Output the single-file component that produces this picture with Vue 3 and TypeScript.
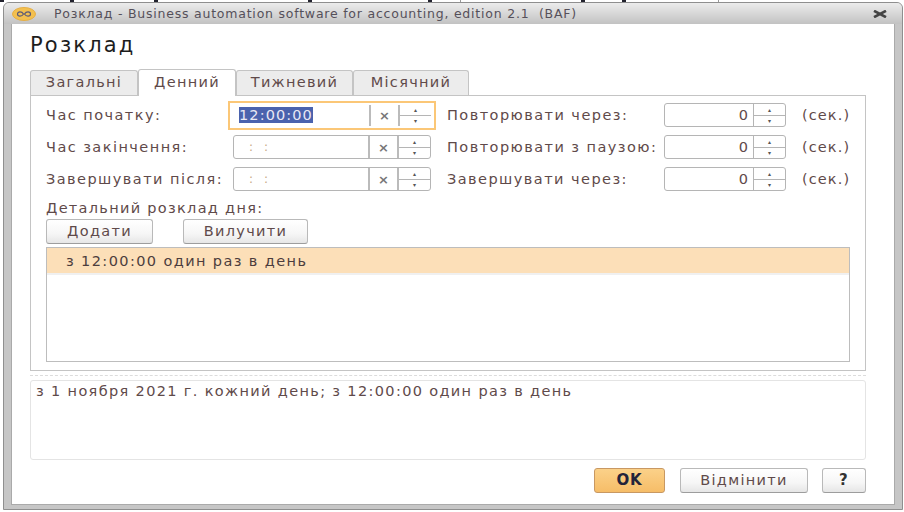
<script setup lang="ts">
const tabs = [
  { label: 'Загальні', width: 108 },
  { label: 'Денний', width: 98 },
  { label: 'Тижневий', width: 117 },
  { label: 'Місячний', width: 116 },
]
const leftRows = [
  { label: 'Час початку:', value: '12:00:00', active: true },
  { label: 'Час закінчення:', value: ': :', active: false },
  { label: 'Завершувати після:', value: ': :', active: false },
]
const rightRows = ['Повторювати через:', 'Повторювати з паузою:', 'Завершувати через:']
const ticks = [0, 70, 154, 308, 428, 581, 622]
</script>

<template>
  <div class="page">
    <svg class="top-ticks" width="904" height="2" viewBox="0 0 904 2" aria-hidden="true">
      <rect v-for="x in ticks" :key="x" :x="x" y="0" width="4" height="2" fill="#22222e" />
      <rect x="460" y="0" width="1" height="2" fill="#999" />
      <rect x="718" y="0" width="1" height="2" fill="#999" />
    </svg>
    <div class="window">
      <header class="titlebar">
        <svg class="logo" width="24" height="14" viewBox="0 0 24 14">
          <ellipse cx="12" cy="7" rx="11.500" ry="6.500" fill="#f3c04f" stroke="#e5ae45" />
          <path d="M11.500 7c-1-1.700-2-2.200-3.500-2.200S5.500 5.700 5.500 7s1 2.200 2.500 2.200S10.500 8.700 11.500 7zm1 0c1-1.700 2-2.200 3.500-2.200s2.500.9 2.500 2.200-1 2.200-2.500 2.200S13.500 8.700 12.500 7z" fill="none" stroke="#5a5a78" stroke-width="1.200" />
        </svg>
        <span class="title-text">Розклад - Business automation software for accounting, edition 2.1 &nbsp;(BAF)</span>
        <svg class="close" width="14" height="8" viewBox="0 0 14 8">
          <path d="M1 .8l12 6.400M13 .8L1 7.200" stroke="#444" stroke-width="2.600" />
        </svg>
      </header>

      <main class="body">
        <h1 class="heading">Розклад</h1>

        <nav class="tabs">
          <div
            v-for="(tab, i) in tabs"
            :key="tab.label"
            class="tab"
            :class="{ selected: i === 1 }"
            :style="{ width: tab.width + 'px' }"
          >{{ tab.label }}</div>
        </nav>

        <section class="panel">
          <div class="fields">
            <div class="col-left">
              <div v-for="row in leftRows" :key="row.label" class="row">
                <label class="label label-left">{{ row.label }}</label>
                <div class="time-input" :class="{ active: row.active }">
                  <div class="time-value">
                    <span v-if="row.active" class="sel">{{ row.value }}</span>
                    <span v-else class="blank">:&nbsp;&nbsp;:</span>
                  </div>
                  <div class="clear">×</div>
                  <div class="spin">
                    <span>▴</span>
                    <span>▾</span>
                  </div>
                </div>
              </div>
            </div>
            <div class="col-right">
              <div v-for="row in rightRows" :key="row" class="row">
                <label class="label label-right">{{ row }}</label>
                <div class="num-input">
                  <div class="num-value">0</div>
                  <div class="spin">
                    <span>▴</span>
                    <span>▾</span>
                  </div>
                </div>
                <span class="unit">(сек.)</span>
              </div>
            </div>
          </div>

          <div class="detail-label">Детальний розклад дня:</div>
          <div class="actions">
            <button class="btn btn-add">Додати</button>
            <button class="btn btn-remove">Вилучити</button>
          </div>
          <div class="list">
            <div class="list-item">з 12:00:00 один раз в день</div>
          </div>
        </section>

        <div class="splitter"></div>

        <div class="summary">з 1 ноября 2021 г. кожний день; з 12:00:00 один раз в день</div>

        <footer class="footer">
          <button class="btn btn-ok">OK</button>
          <button class="btn btn-cancel">Відмінити</button>
          <button class="btn btn-help">?</button>
        </footer>
      </main>
    </div>
  </div>
</template>

<style scoped>
.page {
  position: relative;
  width: 904px;
  height: 512px;
  box-sizing: border-box;
  padding: 2px 1px 2px 3px;
  background: #fff;
  overflow: hidden;
  font-family: "DejaVu Sans", sans-serif;
  color: #5f4a4a;
}
.top-ticks {
  position: absolute;
  top: 0;
  left: 0;
}
.window {
  height: 100%;
  box-sizing: border-box;
  display: flex;
  flex-direction: column;
  border: 1px solid #8f8f8f;
  border-radius: 6px 6px 0 0;
  background: #c6c6c6;
  padding: 0 7px 4px;
}
.titlebar {
  height: 21px;
  flex: none;
  display: flex;
  align-items: center;
  margin: 0 -7px;
  padding: 0 15px 0 8px;
  background: linear-gradient(#ececec, #c2c2c2);
  border-radius: 5px 5px 0 0;
}
.logo { flex: none; }
.title-text {
  margin-left: 18px;
  font-size: 12.500px;
  letter-spacing: 0.78px;
  color: #55505a;
  white-space: nowrap;
  flex: 1;
}
.close { flex: none; }
.body {
  flex: 1;
  background: #fff;
  padding: 0 28px 0 18px;
  display: flex;
  flex-direction: column;
  border: 1px solid #aaa;
  border-top: none;
  min-height: 0;
}
.heading {
  margin: 9px 0 0;
  height: 24px;
  line-height: 24px;
  font-size: 21px;
  font-weight: 400;
  color: #1d1d1d;
  letter-spacing: 2.2px;
}
.tabs {
  margin-top: 12px;
  display: flex;
  height: 26px;
  position: relative;
  z-index: 1;
}
.tab {
  box-sizing: border-box;
  height: 25px;
  margin-top: 1px;
  border: 1px solid #c4c4c4;
  border-bottom: none;
  border-radius: 3px 3px 0 0;
  background: #ececec;
  font-size: 14.500px;
  letter-spacing: 1.3px;
  line-height: 23px;
  text-align: center;
  color: #5f4a4a;
}
.tab.selected {
  height: 27px;
  margin-top: 0;
  background: #fff;
  line-height: 25px;
}
.panel {
  height: 276px;
  flex: none;
  box-sizing: border-box;
  border: 1px solid #c4c4c4;
  padding: 3px 15px 0;
  display: flex;
  flex-direction: column;
}
.fields {
  display: flex;
  height: 96px;
  flex: none;
}
.col-left { width: 401px; flex: none; }
.col-right { flex: 1; }
.row {
  display: flex;
  align-items: center;
  height: 32px;
}
.label {
  font-size: 14.500px;
  letter-spacing: 1.45px;
  white-space: nowrap;
  color: #5f4a4a;
}
.label-left { width: 187px; flex: none; }
.label-right { width: 217px; flex: none; }
.time-input, .num-input {
  box-sizing: border-box;
  height: 24px;
  display: flex;
  border: 1px solid #b5b5b5;
  border-radius: 3px;
  background: #fff;
}
.time-input { width: 198px; }
.time-input.active {
  border: 2px solid #fbc777;
  border-radius: 0;
  height: 29px;
  width: 208px;
  margin-left: -5px;
  padding: 2px 3px 2px 2px;
}
.time-value {
  flex: 1;
  display: flex;
  align-items: center;
  padding-left: 15px;
  font-size: 14.500px;
  letter-spacing: 1.1px;
}
.active .time-value { padding-left: 7px; }
.sel {
  background: #4a62ad;
  color: #e8e8f4;
  line-height: 16px;
}
.blank { color: #c8a884; font-size: 12px; }
.clear {
  width: 31px;
  flex: none;
  display: flex;
  align-items: center;
  justify-content: center;
  border-left: 2px solid #bbb;
  border-right: 2px solid #bbb;
  box-sizing: border-box;
  font-size: 13px;
  font-weight: 700;
  color: #777;
}
.spin {
  width: 31px;
  flex: none;
  display: flex;
  flex-direction: column;
  font-size: 6px;
  color: #555;
}
.spin span {
  flex: 1;
  display: flex;
  align-items: center;
  justify-content: center;
}
.spin span:first-child { border-bottom: 1px solid #b5b5b5; }
.num-input { width: 122px; }
.num-value {
  flex: 1;
  text-align: right;
  padding-right: 5px;
  line-height: 22px;
  font-size: 14.500px;
  color: #5f4a4a;
}
.num-input .spin { border-left: 1px solid #b5b5b5; }
.unit {
  margin-left: 16px;
  font-size: 14.500px;
  letter-spacing: 1.1px;
}
.detail-label {
  margin-top: 5px;
  height: 17px;
  line-height: 17px;
  font-size: 14.500px;
  letter-spacing: 1.3px;
}
.actions {
  display: flex;
  gap: 30px;
  margin-top: 2px;
}
.btn {
  box-sizing: border-box;
  height: 25px;
  padding: 0 0 2px;
  border: 1px solid #b9b9b9;
  border-bottom-color: #9d9d9d;
  border-radius: 3px;
  background: linear-gradient(#fff, #f6f6f6 60%, #e6e6e6);
  font-family: inherit;
  font-size: 14.500px;
  letter-spacing: 1.3px;
  color: #5f4a4a;
}
.btn-add { width: 107px; }
.btn-remove { width: 125px; }
.list {
  margin-top: 3px;
  width: 804px;
  height: 115px;
  box-sizing: border-box;
  border: 1px solid #bdbdbd;
  background: #fff;
}
.list-item {
  height: 25px;
  line-height: 27px;
  padding-left: 19px;
  background: #fcdfb8;
  border-bottom: 2px solid #f0f0f0;
  font-size: 14.500px;
  letter-spacing: 1.4px;
  color: #4c3d3d;
}
.splitter {
  margin-top: 4px;
  height: 0;
  flex: none;
  border-top: 1px dashed #dcdcdc;
}
.summary {
  margin-top: 4px;
  height: 80px;
  flex: none;
  box-sizing: border-box;
  border: 1px solid #e4e4e4;
  border-radius: 3px;
  padding: 1px 5px;
  font-size: 14.500px;
  line-height: 19px;
  letter-spacing: 1.35px;
  color: #5f4a4a;
}
.footer {
  display: flex;
  justify-content: flex-end;
  margin-top: 8px;
  gap: 14px;
}
.btn-ok {
  width: 71px;
  margin-right: 1px;
  background: linear-gradient(#fbd189, #f6bd68);
  border-color: #c89862;
  font-weight: 700;
  font-size: 15px;
  letter-spacing: 0.8px;
  color: #23233a;
}
.btn-cancel { width: 128px; }
.btn-help {
  width: 44px;
  font-weight: 700;
  font-size: 15px;
  color: #333;
}
</style>
